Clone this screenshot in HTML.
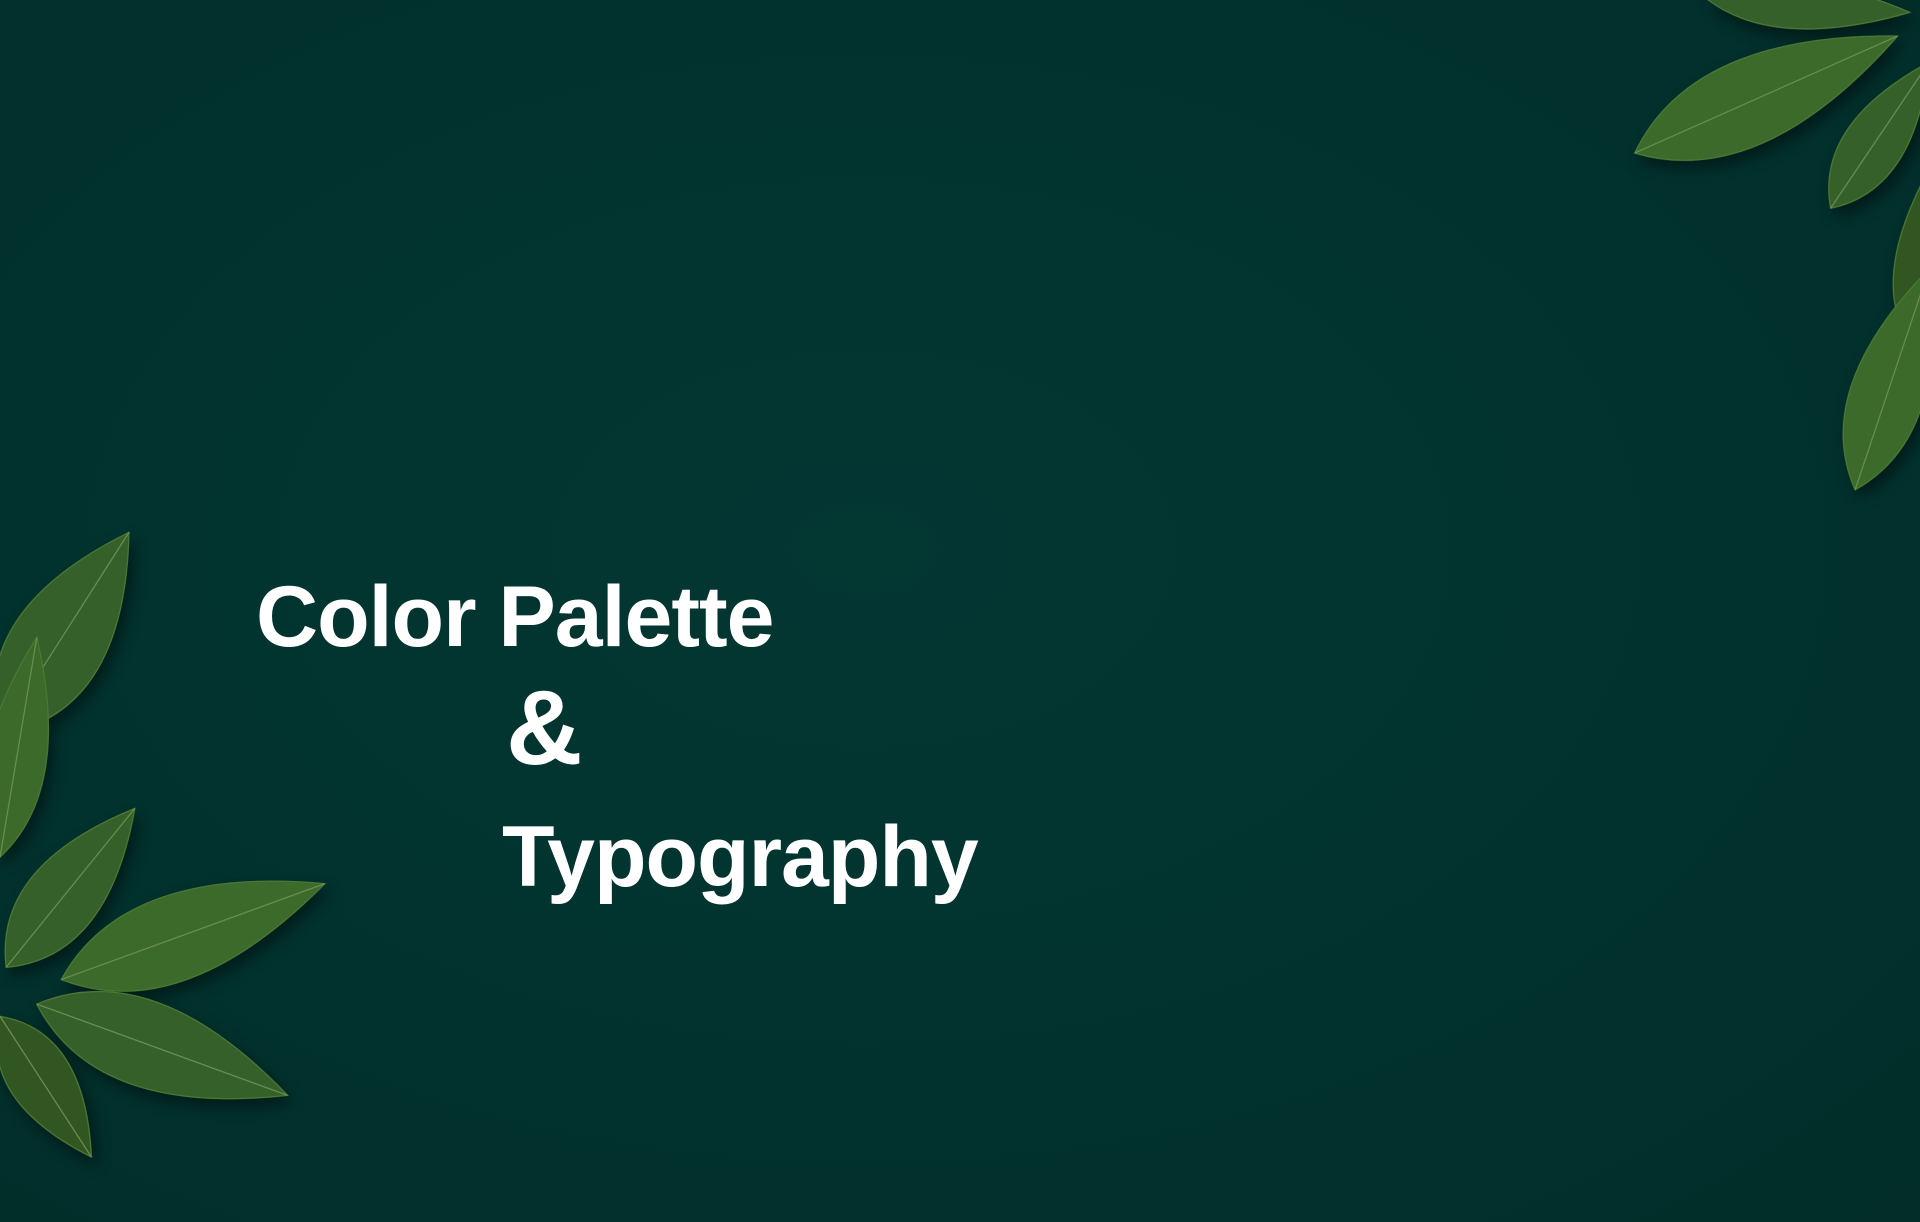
<!DOCTYPE html>
<html><head><meta charset="utf-8">
<style>
html,body{margin:0;padding:0;}
body{width:1920px;height:1222px;overflow:hidden;position:relative;
background:radial-gradient(ellipse at 45% 45%,#033732 0%,#02322e 60%,#022d29 100%);
font-family:"Liberation Sans",sans-serif;color:#fff;}
.t{position:absolute;font-weight:bold;white-space:nowrap;line-height:1;letter-spacing:-1px;}
svg{position:absolute;left:0;top:0;}
</style></head><body>
<svg width="1920" height="1222" viewBox="0 0 1568 998" preserveAspectRatio="none">
<defs>
<filter id="sh" x="-20%" y="-20%" width="140%" height="140%"><feDropShadow dx="4" dy="6" stdDeviation="6" flood-color="#000" flood-opacity="0.45"/></filter>
</defs>
<g filter="url(#sh)">
<g fill="#36602a" stroke="#4d7a36" stroke-width="1">
<g transform="translate(0,600) rotate(-57.5)"><path d="M0 0 Q69 -77 196 0 Q69 77 0 0Z"/><path d="M0 0L196 0" stroke="#6b9050"/></g>
<g transform="translate(0,700) rotate(-80.5)"><path d="M0 0 Q64 -49 182 0 Q64 49 0 0Z" fill="#3b6a2c"/><path d="M0 0L182 0" stroke="#6b9050"/></g>
<g transform="translate(5,790) rotate(-51)"><path d="M0 0 Q58 -60 167 0 Q58 60 0 0Z"/><path d="M0 0L167 0" stroke="#6b9050"/></g>
<g transform="translate(50,800) rotate(-20)"><path d="M0 0 Q80 -70 229 0 Q80 70 0 0Z" fill="#3b6a2c"/><path d="M0 0L229 0" stroke="#6b9050"/></g>
<g transform="translate(30,820) rotate(20)"><path d="M0 0 Q76 -70 218 0 Q76 70 0 0Z"/><path d="M0 0L218 0" stroke="#6b9050"/></g>
<g transform="translate(0,830) rotate(57)"><path d="M0 0 Q48 -52 137 0 Q48 52 0 0Z" fill="#305724"/><path d="M0 0L137 0" stroke="#6b9050"/></g>
<g transform="translate(1335,125) rotate(-24)"><path d="M0 0 Q82 -70 235 0 Q82 70 0 0Z" fill="#3b6a2c"/><path d="M0 0L235 0" stroke="#6b9050"/></g>
<g transform="translate(1395,0) rotate(3.5)"><path d="M0 0 Q58 -38 165 0 Q58 38 0 0Z"/></g>
<g transform="translate(1495,170) rotate(-56)"><path d="M0 0 Q50 -49 144 0 Q50 49 0 0Z"/><path d="M0 0L144 0" stroke="#6b9050"/></g>
<g transform="translate(1560,280) rotate(-86)"><path d="M0 0 Q45 -35 130 0 Q45 35 0 0Z" fill="#305724"/></g>
<g transform="translate(1515,400) rotate(-71.5)"><path d="M0 0 Q66 -60 190 0 Q66 60 0 0Z" fill="#3b6a2c"/><path d="M0 0L190 0" stroke="#6b9050"/></g>
</g></g>
</svg>
<div class="t" style="left:256px;top:574px;font-size:86px;">Color Palette</div>
<div class="t" style="left:506px;top:675px;font-size:106px;">&amp;</div>
<div class="t" style="left:502px;top:814px;font-size:86px;">Typography</div>
</body></html>
